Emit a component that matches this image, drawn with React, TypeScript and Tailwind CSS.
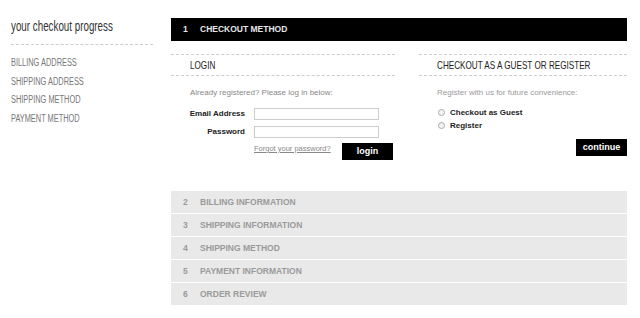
const steps = [
  { n: 2, label: "BILLING INFORMATION" },
  { n: 3, label: "SHIPPING INFORMATION" },
  { n: 4, label: "SHIPPING METHOD" },
  { n: 5, label: "PAYMENT INFORMATION" },
  { n: 6, label: "ORDER REVIEW" },
];

const progress = ["BILLING ADDRESS", "SHIPPING ADDRESS", "SHIPPING METHOD", "PAYMENT METHOD"];

const sans = "font-['Liberation_Sans',Arial,sans-serif]";
// condensed look: no narrow face installed, so squeeze Liberation Sans
const squeeze = "inline-block origin-left whitespace-nowrap";

const Radio = ({ label }: { label: string }) => (
  <label className="flex items-center gap-[5px] h-[13px]">
    <span className="w-[7px] h-[7px] rounded-full border border-[#aaa] bg-[#f4f4f4]" />
    <span className="text-[8px] font-bold text-[#222]">{label}</span>
  </label>
);

export default function App() {
  return (
    <div className={`flex w-[640px] h-[318px] bg-white ${sans}`}>
      <aside className="w-[142px] ml-[11px] mr-[18px] pt-[16px]">
        <h2 className="h-[20px] leading-[20px] text-[14px] text-[#333]">
          <span className={`${squeeze} scale-x-[0.7]`}>your checkout progress</span>
        </h2>
        <div className="mt-[8px] border-t border-dashed border-[#ccc]" />
        <ul className="mt-[11px] flex flex-col gap-[5.7px] text-[10px] leading-[13px] text-[#777]">
          {progress.map((p) => (
            <li key={p} className="h-[13px]">
              <span className={`${squeeze} scale-x-[0.74]`}>{p}</span>
            </li>
          ))}
        </ul>
      </aside>

      <main className="w-[456px] pt-[18px]">
        <div className="h-[23px] bg-black flex items-center px-[12px] text-[8.5px] font-bold text-[#e6e6e6]">
          <span className="w-[17px]">1</span>
          <span>CHECKOUT METHOD</span>
        </div>

        <div className="flex gap-[24px] mt-[13px]">
          <section className="w-[224px]">
            <div className="h-[22px] border-y border-dashed border-[#ccc] flex items-center pl-[19px] text-[11px] text-[#222]">
              <span className={`${squeeze} scale-x-[0.74]`}>LOGIN</span>
            </div>
            <p className="mt-[11px] pl-[19px] text-[8px] leading-[11px] text-[#888]">Already registered? Please log in below:</p>
            <div className="mt-[10px] flex flex-col gap-[6px]">
              <div className="flex items-center">
                <span className="w-[74px] text-right text-[8px] font-bold text-[#222]">Email Address</span>
                <input className="ml-[9px] w-[125px] h-[12px] border border-[#ccc] bg-white" />
              </div>
              <div className="flex items-center">
                <span className="w-[74px] text-right text-[8px] font-bold text-[#222]">Password</span>
                <input type="password" className="ml-[9px] w-[125px] h-[12px] border border-[#ccc] bg-white" />
              </div>
            </div>
            <div className="flex items-start mt-[5px] pl-[83px]">
              <a className="text-[7.5px] text-[#888] underline">Forgot your password?</a>
              <button className="ml-auto mr-[2px] w-[51px] h-[17px] bg-black text-white text-[9px] font-bold">login</button>
            </div>
          </section>

          <section className="w-[208px]">
            <div className="h-[22px] border-y border-dashed border-[#ccc] flex items-center pl-[18px] text-[11px] text-[#222]">
              <span className={`${squeeze} scale-x-[0.74]`}>CHECKOUT AS A GUEST OR REGISTER</span>
            </div>
            <p className="mt-[11px] pl-[18px] text-[8px] leading-[11px] text-[#999]">Register with us for future convenience:</p>
            <div className="mt-[8px] pl-[19px] flex flex-col">
              <Radio label="Checkout as Guest" />
              <Radio label="Register" />
            </div>
            <div className="flex justify-end mt-[7px]">
              <button className="w-[51px] h-[17px] bg-black text-white text-[9px] font-bold">continue</button>
            </div>
          </section>
        </div>

        <div className="mt-[31px] flex flex-col gap-[1px]">
          {steps.map((s) => (
            <div key={s.n} className="h-[22px] bg-[#e9e9e9] flex items-center px-[12px] text-[8.5px] font-bold text-[#9a9a9a]">
              <span className="w-[17px]">{s.n}</span>
              <span>{s.label}</span>
            </div>
          ))}
        </div>
      </main>
    </div>
  );
}
